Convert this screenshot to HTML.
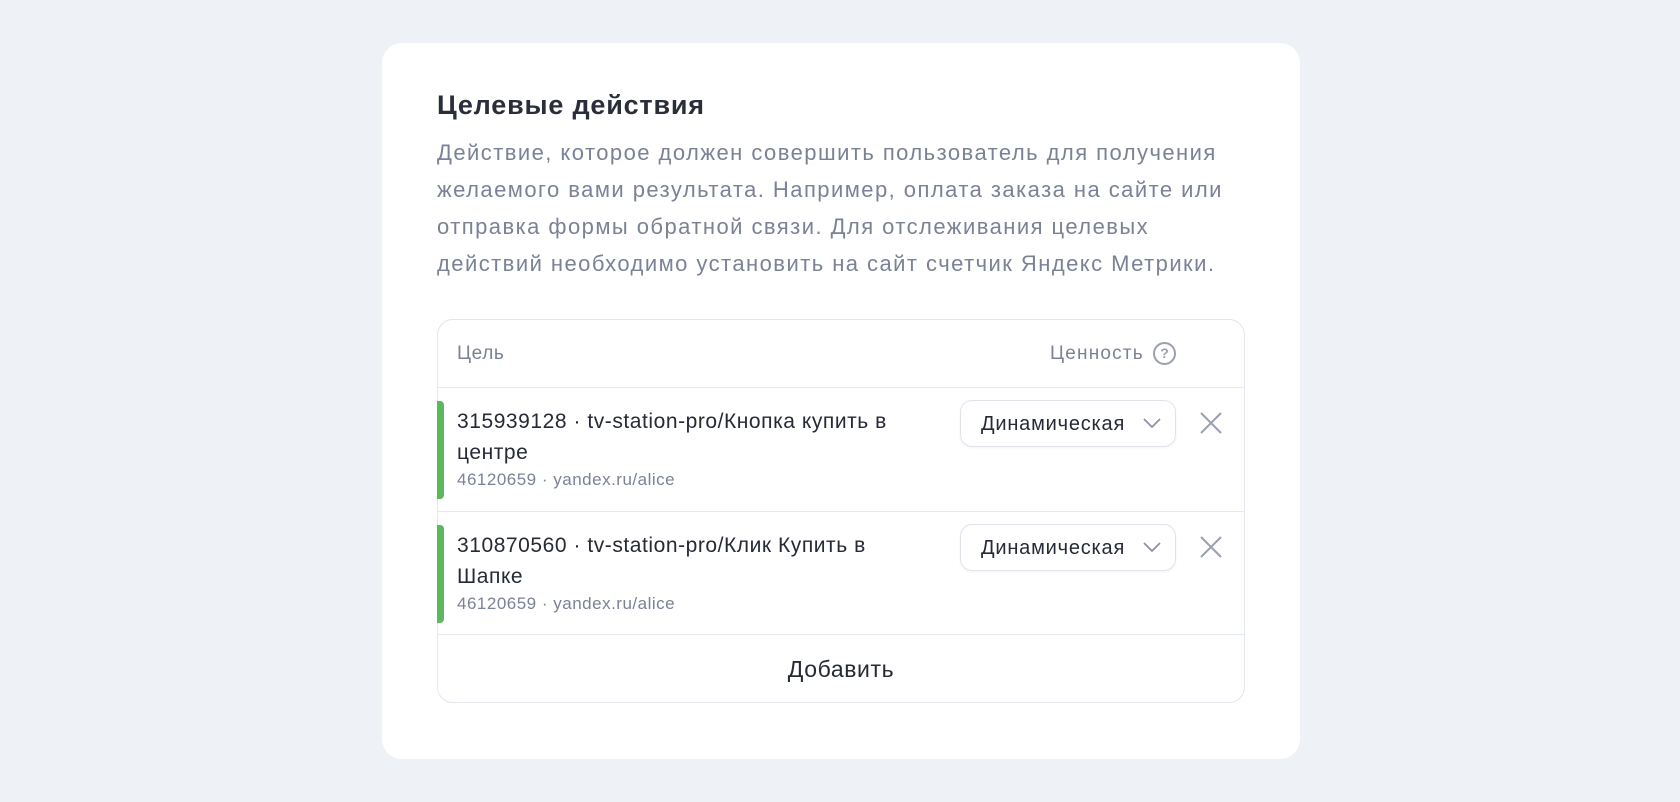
<!DOCTYPE html>
<html><head><meta charset="utf-8"><style>
*{box-sizing:border-box;margin:0;padding:0}
body{width:1680px;height:802px;background:#eef1f6;font-family:"Liberation Sans","DejaVu Sans",sans-serif;position:relative;overflow:hidden;color:#262a36}
.card{position:absolute;left:382px;top:43px;width:918px;height:716px;background:#fff;border-radius:20px}
.t{position:absolute;left:437px;top:90px;font-size:27px;font-weight:bold;color:#2a2e3a;letter-spacing:0.8px}
.p{position:absolute;left:437px;top:134px;width:860px;font-size:22px;line-height:37px;color:#7b8296;letter-spacing:1.45px;white-space:nowrap}
.tbl{position:absolute;left:437px;top:319px;width:808px;height:384px;border:1px solid #e3e6ec;border-radius:16px}
.hd{position:absolute;top:0;left:0;right:0;height:68px;border-bottom:1px solid #e6e9ee}
.hd .c{position:absolute;left:19px;top:23px;font-size:19px;color:#7b8296;letter-spacing:0.6px}
.hd .v{position:absolute;left:612px;top:23px;font-size:19px;color:#7b8296;letter-spacing:1.2px}
.q{position:absolute;left:715px;top:22px;width:23px;height:23px;border:2px solid #9aa0b0;border-radius:50%;font-size:14px;font-weight:bold;color:#9aa0b0;text-align:center;line-height:19px}
.row{position:absolute;left:0;right:0;border-bottom:1px solid #e6e9ee}
.bar{position:absolute;left:-1px;top:13px;width:7px;height:98px;background:#5cb85c;border-radius:0 4px 4px 0}
.l1{position:absolute;left:19px;top:18px;font-size:21px;line-height:31px;color:#262a36;white-space:nowrap;letter-spacing:0.55px}
.sub{position:absolute;left:19px;top:82px;font-size:17px;color:#7b8296;letter-spacing:0.5px}
.dd{position:absolute;left:522px;top:12px;width:216px;height:47px;border:1px solid #e0e3e9;border-radius:12px;box-shadow:0 1px 2px rgba(0,0,0,.05);font-size:20px;padding:12px 0 0 20px;color:#262a36;letter-spacing:0.8px}
.dd svg{position:absolute;right:14px;top:17px}
.x{position:absolute;left:761px;top:23px}
.add{position:absolute;left:0;right:0;top:315px;height:68px;text-align:center;font-size:23px;line-height:68px;color:#262a36;letter-spacing:0.6px}
</style></head><body>
<div class="card"></div>
<div class="t">Целевые действия</div>
<div class="p">Действие, которое должен совершить пользователь для получения<br>желаемого вами результата. Например, оплата заказа на сайте или<br>отправка формы обратной связи. Для отслеживания целевых<br>действий необходимо установить на сайт счетчик Яндекс Метрики.</div>
<div class="tbl">
<div class="hd"><div class="c">Цель</div><div class="v">Ценность</div><div class="q">?</div></div>
<div class="row" style="top:68px;height:124px">
<div class="bar"></div>
<div class="l1">315939128 · tv-station-pro/Кнопка купить в<br>центре</div>
<div class="sub">46120659 · yandex.ru/alice</div>
<div class="dd">Динамическая<svg width="18" height="11" viewBox="0 0 18 11"><path d="M1 1l8 8 8-8" fill="none" stroke="#8d93a3" stroke-width="1.8"/></svg></div>
<svg class="x" width="24" height="24" viewBox="0 0 24 24"><path d="M2 2l20 20M22 2L2 22" stroke="#9aa0b0" stroke-width="2"/></svg>
</div>
<div class="row" style="top:192px;height:123px">
<div class="bar"></div>
<div class="l1">310870560 · tv-station-pro/Клик Купить в<br>Шапке</div>
<div class="sub">46120659 · yandex.ru/alice</div>
<div class="dd">Динамическая<svg width="18" height="11" viewBox="0 0 18 11"><path d="M1 1l8 8 8-8" fill="none" stroke="#8d93a3" stroke-width="1.8"/></svg></div>
<svg class="x" width="24" height="24" viewBox="0 0 24 24"><path d="M2 2l20 20M22 2L2 22" stroke="#9aa0b0" stroke-width="2"/></svg>
</div>
<div class="add">Добавить</div>
</div>
</body></html>
